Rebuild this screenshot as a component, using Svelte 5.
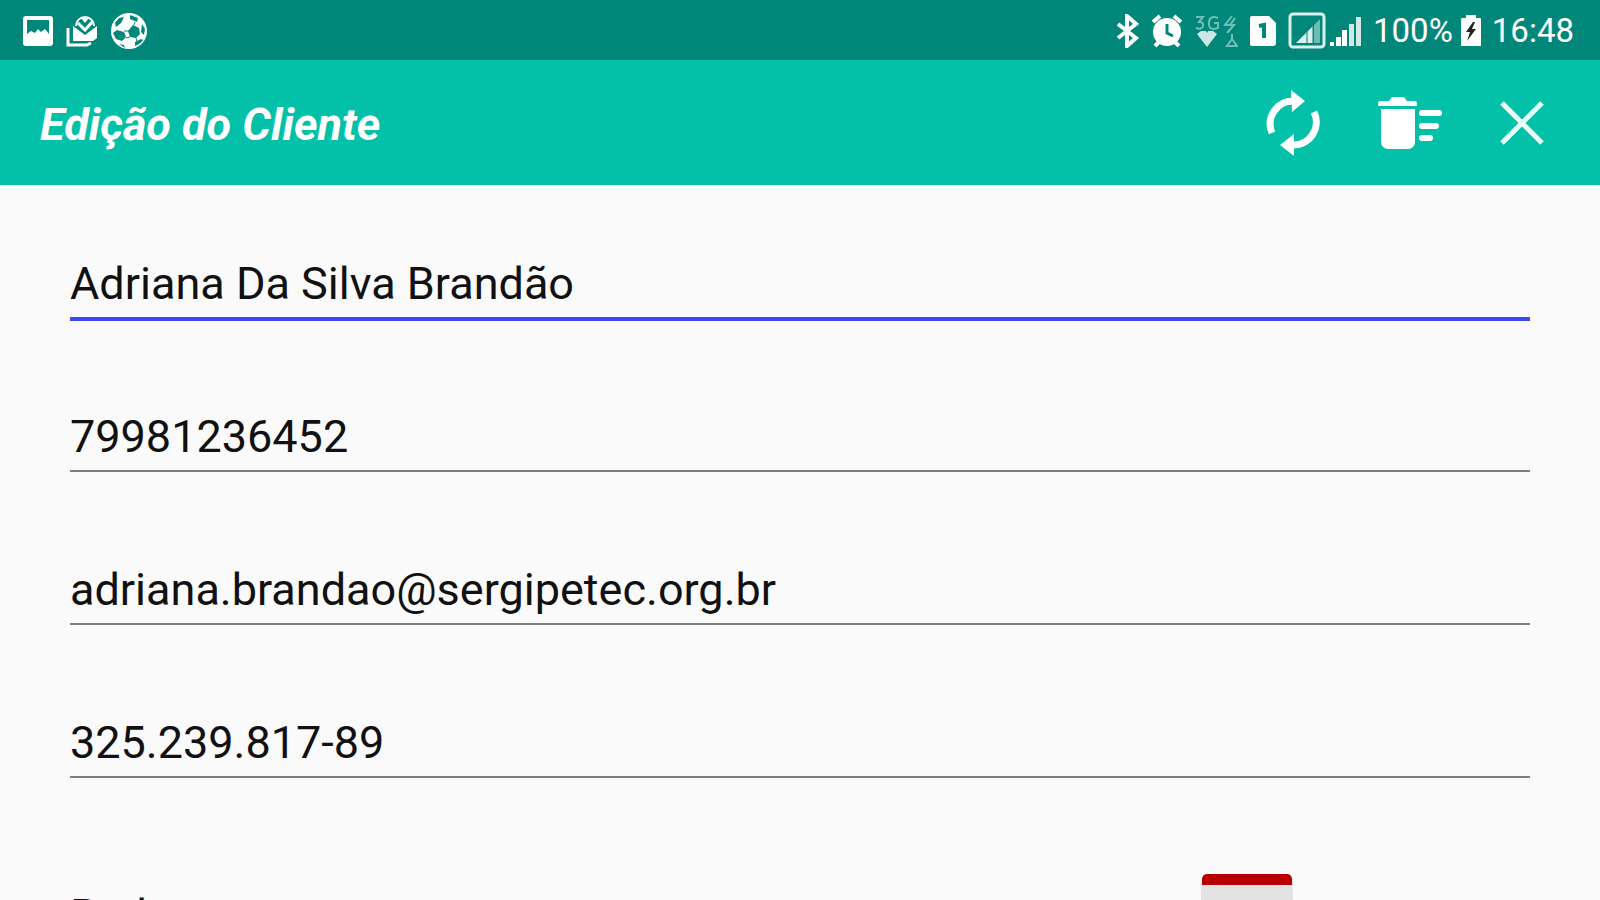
<script>
	let active = $state('nome');

	let fields = $state([
		{ id: 'nome', label: 'Nome', type: 'text', value: 'Adriana Da Silva Brandão' },
		{ id: 'telefone', label: 'Telefone', type: 'tel', value: '79981236452' },
		{ id: 'email', label: 'E-mail', type: 'email', value: 'adriana.brandao@sergipetec.org.br' },
		{ id: 'cpf', label: 'CPF', type: 'text', value: '325.239.817-89' }
	]);

	let extra = $state('Rede');
</script>

<div class="screen">
	<div class="status">
		<div class="group">
			<svg width="32" height="32" viewBox="0 0 32 32" aria-hidden="true">
				<path
					fill="#fff"
					fill-rule="evenodd"
					d="M4 1h24a3 3 0 0 1 3 3v24a3 3 0 0 1-3 3H4a3 3 0 0 1-3-3V4a3 3 0 0 1 3-3zM5 5v14l4-3 4 2 3-4 3 3 4-3 4 5V5z"
				/>
			</svg>
			<svg width="32" height="32" viewBox="0 0 32 32" aria-hidden="true">
				<path d="M2 13v17h19l4-2" fill="none" stroke="#fff" stroke-width="3" />
				<path fill="#fff" d="M7 11l12 9 12-9v12l-4 3H7z" />
				<path
					d="M10 11a9 9 0 0 1 18 0"
					fill="none"
					stroke="#fff"
					stroke-width="2"
				/>
				<path d="M12 8l7 7 8-9" fill="none" stroke="#fff" stroke-width="3" />
				<path fill="#fff" d="M15 3h8l-4 5z" />
			</svg>
			<svg width="38" height="38" viewBox="0 0 38 38" aria-hidden="true">
				<circle cx="19" cy="19" r="18" fill="#fff" />
				<g fill="#00877a">
					<path d="M23 13l6 3 1 6-4 4-6-1-2-6z" />
					<path d="M20 3l8 3-1 4-7-3zM5 11l4-5 5-1-3 6-5 4zM32 12l3 5-1 6-3-3zM7 18l7 2 2 5-4 4-6-2-3-6zM25 30l6-3 2 1c-2 3-4 4-8 6zM9 32l5 1 1 3z" />
				</g>
				<path
					d="M14 19l5 0M25 10l-1 3M16 26l4-1M26 26l1 4"
					fill="none"
					stroke="#00877a"
					stroke-width="1"
				/>
			</svg>
		</div>

		<div class="group system">
			<svg width="24" height="34" viewBox="0 0 24 34" aria-hidden="true">
				<path
					d="M2 10l18 14-9 8V2l9 8L2 24"
					fill="none"
					stroke="#fff"
					stroke-width="4"
				/>
			</svg>
			<svg width="32" height="34" viewBox="0 0 32 34" aria-hidden="true">
				<path d="M2 8l7-6M30 8l-7-6M8 28l-4 4M24 28l4 4" stroke="#fff" stroke-width="4" />
				<circle cx="16" cy="18" r="14" fill="#fff" />
				<path d="M16 10v9l6 3" fill="none" stroke="#00877a" stroke-width="3" />
			</svg>
			<svg width="44" height="34" viewBox="0 0 44 34" aria-hidden="true">
				<g fill="none" stroke="#fff" stroke-width="2" opacity="0.45">
					<path d="M2 3h7l-4 5q5 0 4 4t-7 2M24 4q-8-3-9 4t5 7l4-1V9h-4" />
					<path d="M38 2l-7 9h9l-7 8M41 4l-5 7M38 20v6M33 32h10l-5-7z" />
				</g>
				<path fill="#fff" opacity="0.8" d="M7 17h5l1 2 1-2h5l4 3-10 13L3 20z" />
			</svg>
			<svg width="28" height="32" viewBox="0 0 28 32" aria-hidden="true">
				<path fill="#fff" d="M3 1h17l7 7v20a3 3 0 0 1-3 3H3a2 2 0 0 1-2-2V3a2 2 0 0 1 2-2z" />
				<path d="M10 11l5-1v13" fill="none" stroke="#00877a" stroke-width="4" />
			</svg>
			<div class="signals">
				<svg width="38" height="38" viewBox="0 0 38 38" aria-hidden="true">
					<rect x="2" y="2" width="34" height="33" rx="3" fill="none" stroke="#d9f0ed" stroke-width="3" />
					<path fill="#d9f0ed" d="M8 31L25 14v17z" />
					<path fill="#70b9b0" d="M26 13l6-6v24h-6z" />
					<path d="M19 18v13M25 13v18" stroke="#00877a" stroke-width="1" />
				</svg>
				<svg width="32" height="34" viewBox="0 0 32 34" aria-hidden="true">
					<path fill="#fff" d="M0 28h4v4H0zM6 23h5v9H6zM12 16h5v16h-5z" />
					<path fill="#d0e9e6" d="M19 10h5v22h-5zM26 3h5v29h-5z" />
				</svg>
			</div>
			<div class="battery">
				<span>100%</span>
				<svg width="20" height="34" viewBox="0 0 20 34" aria-hidden="true">
					<path fill="#fff" d="M5 1h10v3h4a1 1 0 0 1 1 1v27H0V5l1-1h4z" />
					<path fill="#222" d="M12 8l-7 10h4L6 27l9-12h-4l3-7z" />
				</svg>
			</div>
			<time>16:48</time>
		</div>
	</div>

	<header>
		<h1>Edição do Cliente</h1>
		<div class="actions">
			<button type="button" aria-label="Atualizar">
				<svg width="54" height="66" viewBox="0 0 54 66" aria-hidden="true">
					<path
						d="M6 43A23 23 0 0 1 28 11M48 22A23 23 0 0 1 26 55"
						fill="none"
						stroke="#fff"
						stroke-width="7"
					/>
					<path fill="#fff" d="M25 0l14 11-13 11zM28 44v22L14 55z" />
				</svg>
			</button>
			<button type="button" aria-label="Excluir">
				<svg width="66" height="54" viewBox="0 0 66 54" aria-hidden="true">
					<path
						fill="#fff"
						d="M3 5h9l3-4h12l3 4h8a2 2 0 0 1 2 2v3H1V7a2 2 0 0 1 2-2zM4 13h34v33a7 7 0 0 1-7 7H11a7 7 0 0 1-7-7z"
					/>
					<path
						d="M45 17h17M45 30h14M45 42h8"
						stroke="#fff"
						stroke-width="6"
						stroke-linecap="round"
					/>
				</svg>
			</button>
			<button type="button" aria-label="Fechar">
				<svg width="44" height="44" viewBox="0 0 44 44" aria-hidden="true">
					<path d="M2 2l40 40M42 2L2 42" stroke="#ebfffa" stroke-width="5" />
				</svg>
			</button>
		</div>
	</header>

	<form>
		{#each fields as field (field.id)}
			<div class="field">
				<input
					id={field.id}
					class:active={active === field.id}
					type={field.type}
					aria-label={field.label}
					spellcheck="false"
					autocomplete="off"
					bind:value={field.value}
					onfocus={() => (active = field.id)}
				/>
			</div>
		{/each}

		<div class="extra">
			<input type="text" aria-label="Plano" bind:value={extra} />
			<button type="button" aria-label="Calendário">
				<svg width="94" height="86" viewBox="0 0 94 86" aria-hidden="true">
					<path fill="#e3e3e3" d="M1 8h92v72a6 6 0 0 1-6 6H7a6 6 0 0 1-6-6z" />
					<path fill="#b90000" d="M2 12V6a5 5 0 0 1 5-5h80a5 5 0 0 1 5 5v6z" />
				</svg>
			</button>
		</div>
	</form>
</div>

<style>
	:global(body) {
		margin: 0;
		background: #fafafa;
	}

	.screen {
		height: 100vh;
		overflow: hidden;
		background: #fafafa;
		color: #111;
		font-family: Roboto, sans-serif;
	}

	.status {
		display: flex;
		align-items: center;
		justify-content: space-between;
		height: 60px;
		padding: 2px 26px 0 22px;
		box-sizing: border-box;
		background: #00877a;
		color: #fff;
	}

	.group {
		display: flex;
		align-items: center;
		gap: 12px;
	}

	.system {
		gap: 11px;
		font-size: 33px;
		line-height: 44px;
	}

	.signals {
		display: flex;
		align-items: center;
		gap: 4px;
	}

	.battery {
		display: flex;
		align-items: center;
		gap: 8px;
	}

	header {
		display: flex;
		align-items: center;
		justify-content: space-between;
		height: 125px;
		padding: 0 56px 0 40px;
		box-sizing: border-box;
		background: #03c1a8;
		color: #fff;
	}

	h1 {
		margin: 0;
		padding-top: 4px;
		font-size: 45px;
		line-height: 54px;
		font-weight: 700;
		font-style: italic;
	}

	.actions {
		display: flex;
		align-items: center;
		gap: 57px;
	}

	button {
		display: block;
		margin: 0;
		padding: 0;
		border: 0;
		background: none;
		cursor: pointer;
	}

	svg {
		display: block;
		flex: none;
	}

	form {
		padding: 72px 70px 0;
	}

	.field {
		height: 153px;
	}

	input {
		display: block;
		width: 100%;
		height: 54px;
		box-sizing: content-box;
		margin: 0;
		padding: 0 0 6px;
		border: 0;
		border-bottom: 2px solid #7d7d7d;
		border-radius: 0;
		outline: none;
		background: none;
		color: inherit;
		font-family: inherit;
		font-size: 45px;
		line-height: 54px;
	}

	input.active {
		border-bottom: 4px solid #3f48f5;
	}

	.extra {
		display: flex;
		align-items: center;
		padding: 4px 236px 0 0;
	}

	.extra input {
		flex: 1;
		min-width: 0;
		padding: 0;
		border: 0;
	}
</style>
